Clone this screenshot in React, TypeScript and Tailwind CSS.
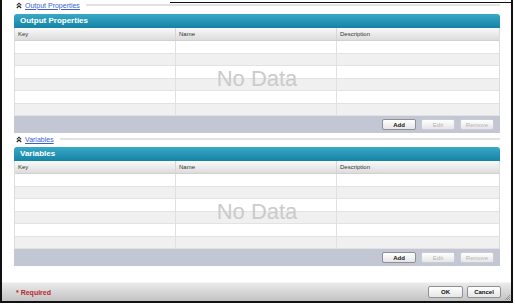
import React from "react";

const F = { fontFamily: '"Liberation Sans", Arial, sans-serif' };

function Chevrons() {
  return (
    <svg width="6" height="7" viewBox="0 0 6 7" className="ml-[2px] shrink-0">
      <path d="M0.8 3.4 L3 1.2 L5.2 3.4 M0.8 6 L3 3.8 L5.2 6" stroke="#222" strokeWidth="1.1" fill="none" />
    </svg>
  );
}

function SectionLink({ label }: { label: string }) {
  return (
    <div className="h-[10px] flex items-center">
      <Chevrons />
      <span className="ml-[3px] text-[7px] leading-none text-[#3b5fd0] underline whitespace-nowrap">{label}</span>
      <div className="ml-[6px] flex-1 h-[2px] bg-[#e2e2e2]" />
    </div>
  );
}

function Btn({ label, disabled }: { label: string; disabled?: boolean }) {
  return (
    <div
      className={
        "w-[34px] h-[11px] rounded-[2px] border flex items-center justify-center text-[6px] leading-none bg-gradient-to-b from-white to-[#e6e6e6] " +
        (disabled ? "border-[#c9ccd4] text-[#b4b4b4]" : "border-[#8e9096] text-[#111] font-bold")
      }
    >
      {label}
    </div>
  );
}

function Panel({ title }: { title: string }) {
  const rows = [13, 12, 13, 12, 13, 12];
  return (
    <div className="flex flex-col">
      <div className="h-[14px] rounded-t-[3px] bg-gradient-to-b from-[#38a9c6] to-[#1483a5] flex items-center pl-[6px]">
        <span className="text-[8px] font-bold text-white leading-none">{title}</span>
      </div>
      <div className="relative border-x border-[#dcdcdc]">
        <div className="h-[13px] grid grid-cols-[161px_161px_1fr] bg-gradient-to-b from-[#fafafa] to-[#dcdcdc] border-b border-[#d0d0d0] text-[6px] text-[#333] leading-none">
          <div className="flex items-center pl-[3px] border-r border-[#d6d6d6]">Key</div>
          <div className="flex items-center pl-[3px] border-r border-[#d6d6d6]">Name</div>
          <div className="flex items-center pl-[3px]">Description</div>
        </div>
        {rows.map((h, i) => (
          <div
            key={i}
            className={
              "grid grid-cols-[161px_161px_1fr] border-b border-[#e2e2e2] " +
              (i % 2 === 0 ? "bg-white" : "bg-[#f0f0f0]")
            }
            style={{ height: h }}
          >
            <div className="border-r border-[#e0e0e0]" />
            <div className="border-r border-[#e0e0e0]" />
            <div />
          </div>
        ))}
        <div className="absolute left-0 right-0 top-[13px] bottom-0 flex items-center justify-center pointer-events-none">
          <span className="text-[22px] leading-none text-[#cbcbcb]">No Data</span>
        </div>
      </div>
      <div className="h-[17px] bg-[#c3c7d3] flex items-center justify-end gap-[5px] pr-[6px]">
        <Btn label="Add" />
        <Btn label="Edit" disabled />
        <Btn label="Remove" disabled />
      </div>
    </div>
  );
}

export default function App() {
  return (
    <div className="relative w-[515px] h-[304px] bg-white" style={F}>
      <div className="absolute left-[170px] w-[343px] top-[2px] h-px bg-[#111]" />
      <div className="w-[513px] h-[303px] border-l-2 border-r-2 border-b-2 border-[#111] flex flex-col">
        <div className="pl-[12px] pr-[11px] flex flex-col">
          <SectionLink label="Output Properties" />
          <div className="mt-[4px]">
            <Panel title="Output Properties" />
          </div>
          <div className="mt-[1px]">
            <SectionLink label="Variables" />
          </div>
          <div className="mt-[3px]">
            <Panel title="Variables" />
          </div>
        </div>
        <div className="flex-1" />
        <div className="h-[19px] border-t border-[#f4f4f4] bg-gradient-to-b from-[#ebebeb] to-[#c2c2c2] flex items-center pl-[14px] pr-[10px] relative">
          <span className="text-[7px] font-bold text-[#b42a2a] leading-none">* Required</span>
          <div className="flex-1" />
          <div className="flex gap-[4px]">
            <div className="w-[35px] h-[12px] rounded-[2px] border border-[#8e9096] bg-gradient-to-b from-white to-[#e6e6e6] flex items-center justify-center text-[6px] font-bold leading-none text-[#111]">OK</div>
            <div className="w-[34px] h-[12px] rounded-[2px] border border-[#8e9096] bg-gradient-to-b from-white to-[#e6e6e6] flex items-center justify-center text-[6px] font-bold leading-none text-[#111]">Cancel</div>
          </div>
          <svg width="6" height="6" viewBox="0 0 6 6" className="absolute right-[1px] bottom-[1px]">
            <path d="M6 1 L1 6 M6 3 L3 6 M6 5 L5 6" stroke="#888" strokeWidth="0.8" />
          </svg>
        </div>
      </div>
    </div>
  );
}
